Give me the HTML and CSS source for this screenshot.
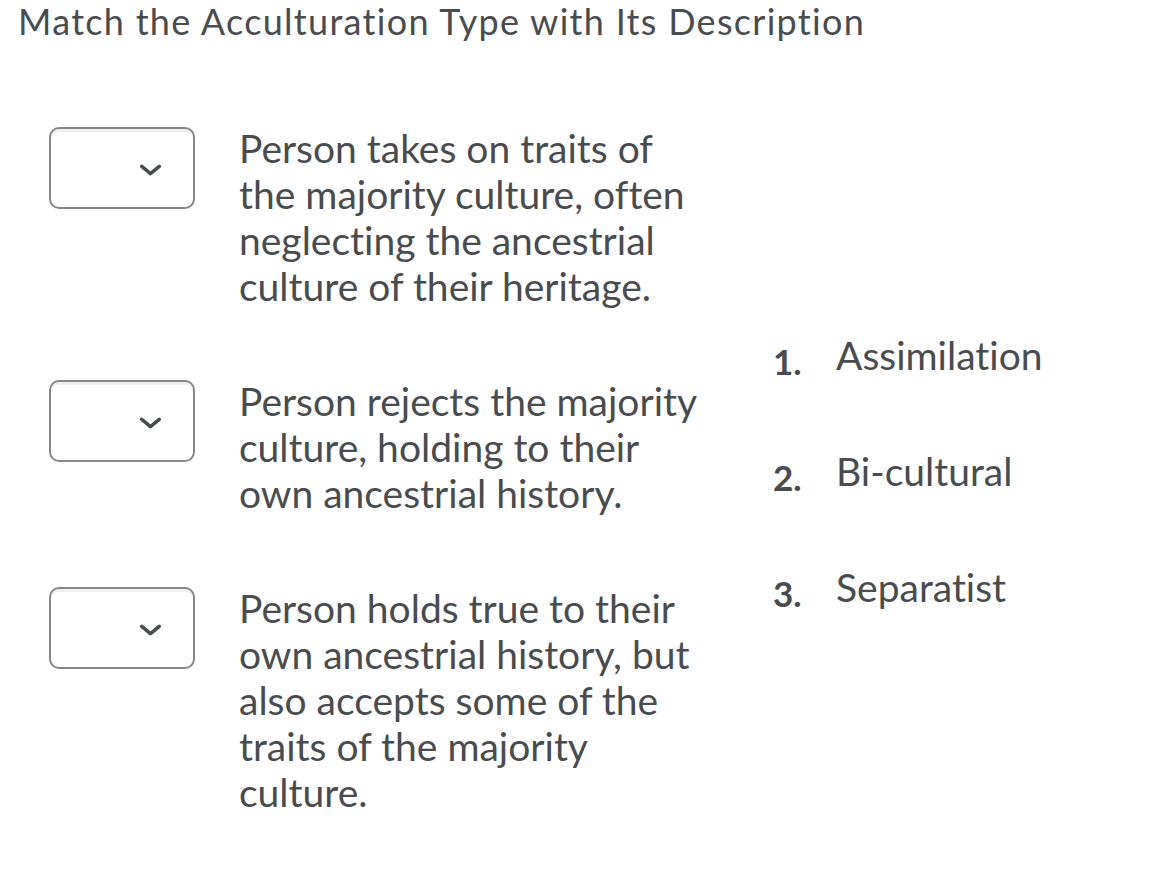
FILE: index.html
```html
<!DOCTYPE html>
<html lang="en">
<head>
<meta charset="utf-8">
<title>Match the Acculturation Type with Its Description</title>
<link rel="stylesheet" href="styles.css">
</head>
<body>
<h1 class="title">Match the Acculturation Type with Its Description</h1>
<div class="match">
  <div class="questions">
    <div class="row">
      <div class="select"><svg class="chev" viewBox="0 0 24 13" width="23" height="12"><path d="M2.5 2.5 L12 10.5 L21.5 2.5" fill="none" stroke="#494c4e" stroke-width="3.8" stroke-linecap="round" stroke-linejoin="round"/></svg></div>
      <p class="desc">Person takes on traits of the majority culture, often neglecting the ancestrial culture of their heritage.</p>
    </div>
    <div class="row">
      <div class="select"><svg class="chev" viewBox="0 0 24 13" width="23" height="12"><path d="M2.5 2.5 L12 10.5 L21.5 2.5" fill="none" stroke="#494c4e" stroke-width="3.8" stroke-linecap="round" stroke-linejoin="round"/></svg></div>
      <p class="desc">Person rejects the majority culture, holding to their own ancestrial history.</p>
    </div>
    <div class="row">
      <div class="select"><svg class="chev" viewBox="0 0 24 13" width="23" height="12"><path d="M2.5 2.5 L12 10.5 L21.5 2.5" fill="none" stroke="#494c4e" stroke-width="3.8" stroke-linecap="round" stroke-linejoin="round"/></svg></div>
      <p class="desc">Person holds true to their own ancestrial history, but also accepts some of the traits of the majority culture.</p>
    </div>
  </div>
  <ol class="answers">
    <li class="answer"><span class="num">1.</span><span class="label">Assimilation</span></li>
    <li class="answer"><span class="num">2.</span><span class="label">Bi-cultural</span></li>
    <li class="answer"><span class="num">3.</span><span class="label">Separatist</span></li>
  </ol>
</div>
</body>
</html>
```
FILE: styles.css
```css
html, body {
  margin: 0;
  padding: 0;
  background: #ffffff;
}
body {
  font-family: Lato, "Liberation Sans", sans-serif;
  color: #494c4e;
  font-variant-ligatures: none;
}
.title {
  margin: 0;
  padding: 0 0 0 18px;
  font-size: 36px;
  font-weight: 400;
  line-height: 42px;
  letter-spacing: 1.3px;
  color: #494c4e;
}
.match {
  display: flex;
  padding: 85px 0 0 49px;
}
.questions {
  display: flex;
  flex-direction: column;
  gap: 71px;
}
.row {
  display: flex;
  align-items: flex-start;
}
.select {
  box-sizing: border-box;
  flex: none;
  width: 146px;
  height: 82px;
  border: 2px solid #878787;
  border-radius: 10px;
  box-shadow: inset 0 3px 0 0 rgba(185, 194, 208, 0.25);
  display: flex;
  align-items: center;
  justify-content: flex-end;
  padding-right: 31px;
  padding-top: 4px;
}
.chev {
  display: block;
}
.desc {
  margin: -2px 0 0 44px;
  width: 462px;
  font-size: 39px;
  line-height: 46px;
}
.answers {
  list-style: none;
  margin: 205px 0 0 72px;
  padding: 0;
  display: flex;
  flex-direction: column;
  gap: 69px;
}
.answer {
  display: flex;
  align-items: baseline;
  font-size: 39px;
  line-height: 46px;
}
.num {
  width: 63px;
  font-weight: 700;
  font-size: 35px;
  line-height: 46px;
  position: relative;
  top: 5px;
}
```
